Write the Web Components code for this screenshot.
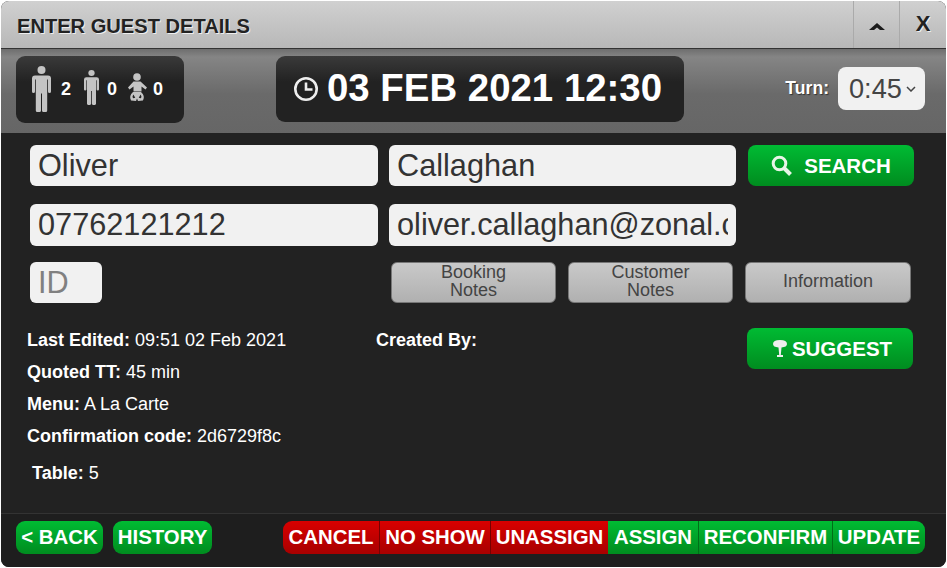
<!DOCTYPE html>
<html>
<head>
<meta charset="utf-8">
<title>Enter guest details</title>
<style>
  html, body { margin: 0; padding: 0; background: #fff; }
  body { font-family: "Liberation Sans", Arial, sans-serif; }
</style>
</head>
<body>
<guest-window>
  <window-title slot="title">ENTER GUEST DETAILS</window-title>
  <info-bar slot="info"></info-bar>
  <guest-form></guest-form>
  <guest-details></guest-details>
  <action-bar slot="footer"></action-bar>
</guest-window>

<script>
class GuestWindow extends HTMLElement {
  constructor () {
    super()
    this.attachShadow({ mode: 'open' }).innerHTML = /*html*/`
      <style>
        :host {
          display: flex;
          flex-direction: column;
          box-sizing: border-box;
          width: 945px;
          height: 566px;
          margin: 1px;
          background: #222;
          border-radius: 8px;
          overflow: hidden;
        }
        main { flex: 1; display: flex; flex-direction: column; }
      </style>
      <slot name="title"></slot>
      <slot name="info"></slot>
      <main><slot></slot></main>
      <slot name="footer"></slot>
    `
  }
}

class WindowTitle extends HTMLElement {
  constructor () {
    super()
    this.attachShadow({ mode: 'open' }).innerHTML = /*html*/`
      <style>
        :host {
          display: flex;
          align-items: stretch;
          height: 48px;
          box-sizing: border-box;
          background: linear-gradient(#d0d0d0, #b8b8b8);
          border-bottom: 1px solid #333;
          color: #222;
        }
        h1 {
          flex: 1;
          margin: 0;
          padding: 14px 0 0 16px;
          font: bold 20.1px "Liberation Sans", sans-serif;
          text-shadow: 1px 1px 0 #eee;
        }
        .btn {
          width: 46px;
          display: flex;
          align-items: center;
          justify-content: center;
          border-left: 1px solid #aaa;
          font: bold 22px "Liberation Sans", sans-serif;
          text-shadow: 1px 1px 0 #eee;
          padding-bottom: 2px;
          box-sizing: border-box;
        }
        .btn:last-child { width: 47px; }
        svg { margin-top: 5px; }
      </style>
      <h1><slot></slot></h1>
      <div class="btn"><svg width="18" height="10" viewBox="0 0 18 10"><path d="M1 9 L9 2 L17 9 L12 9 L9 6.5 L6 9 Z" fill="#1c1c1c"/></svg></div>
      <div class="btn">X</div>
    `
  }
}

class InfoBar extends HTMLElement {
  constructor () {
    super()
    const man = `<circle cx="9.5" cy="4" r="4"/><path d="M3 9.5h13q3 0 3 3v13q0 1.500-1.500 1.500t-1.500-1.500v-12h-.8v31q0 1.500-1.500 1.500h-2.200q-1.500 0-1.500-1.500v-17h-1v17q0 1.500-1.500 1.500h-2.200q-1.500 0-1.500-1.500v-31h-.8v12q0 1.500-1.500 1.500t-1.500-1.500v-13q0-3 3-3z"/>`
    this.attachShadow({ mode: 'open' }).innerHTML = /*html*/`
      <style>
        :host {
          display: flex;
          align-items: flex-start;
          height: 84px;
          box-sizing: border-box;
          padding: 7px 21px 0 15px;
          background: linear-gradient(#6e6e6e 0, #858585 8px, #6a6a6a 45px, #666 100%);
          font-family: "Liberation Sans", sans-serif;
          color: #fff;
        }
        .panel {
          height: 66px;
          box-sizing: border-box;
          background: linear-gradient(#3a3a3a, #222 26px);
          border-radius: 9px;
          display: flex;
          align-items: center;
        }
        .party { width: 168px; height: 67px; padding-left: 16px; font: bold 18px "Liberation Sans", sans-serif; }
        .party svg { display: block; fill: #c4c4c4; flex: none; }
        .date {
          width: 408px;
          margin-left: 92px;
          padding-left: 17px;
          font: bold 38.4px "Liberation Sans", sans-serif;
        }
        .date span { margin-bottom: 2px; }
        .date svg { margin-right: 8px; flex: none; }
        .turn {
          margin-left: auto;
          display: flex;
          align-items: center;
          gap: 9px;
          height: 43px;
          margin-top: 11px;
          font: bold 17.6px "Liberation Sans", sans-serif;
          text-shadow: 1px 1px 1px #333;
        }
        .select {
          width: 87px;
          height: 43px;
          box-sizing: border-box;
          padding-left: 11px;
          background: #f1f1f1;
          border-radius: 8px;
          color: #444;
          display: flex;
          align-items: center;
          font: 27.2px "Liberation Sans", sans-serif;
          text-shadow: none;
        }
        .select svg { margin-left: 4px; }
      </style>
      <div class="panel party">
        <svg width="19" height="46" viewBox="0 0 19 46" style="margin-bottom:2px">${man}</svg>
        <span style="margin:0 13px 0 10px">2</span>
        <svg width="15" height="35" viewBox="0 0 19 46" preserveAspectRatio="none" style="margin-bottom:5px">${man}</svg>
        <span style="margin:0 10px 0 8px">0</span>
        <svg width="20" height="29" viewBox="0 0 20 29" style="margin-bottom:4px">
          <circle cx="10" cy="4" r="3.800"/>
          <path d="M6.500 8.500h7l6.500 6-1.500 2-4-3v5h-8v-5l-4 3-1.500-2z"/>
          <path fill-rule="evenodd" d="M6 19q-4.500 4-2 8.500l5 .5 1-2.500 1 2.500 5-.5q2.500-4.500-2-8.500z M6.300 21.500q-1.300 2-.3 3.800l2.300-.6z M13.700 21.500q1.300 2 .3 3.800l-2.300-.6z"/>
        </svg>
        <span style="margin-left:6px">0</span>
      </div>
      <div class="panel date">
        <svg width="26" height="26" viewBox="0 0 26 26" fill="none" stroke="#eee" stroke-width="2.600"><circle cx="13" cy="13" r="10.700"/><path d="M13 6.500v7h6.500"/></svg>
        <span>03 FEB 2021 12:30</span>
      </div>
      <div class="turn">
        <span>Turn:</span>
        <div class="select">0:45<svg width="10" height="6" viewBox="0 0 10 6" fill="none" stroke="#444" stroke-width="1.500"><path d="M1 1l4 4 4-4"/></svg></div>
      </div>
    `
  }
}

class TextField extends HTMLElement {
  constructor () {
    super()
    this.attachShadow({ mode: 'open' }).innerHTML = /*html*/`
      <style>
        :host {
          display: block;
          height: 100%;
          box-sizing: border-box;
          padding: 0 8px;
          background: #f1f1f1;
          border-radius: 6px;
          color: #333;
          font: 30.7px/41px "Liberation Sans", sans-serif;
          white-space: nowrap;
        }
        :host([placeholder]) { color: #808080; }
        .clip { overflow: hidden; height: 100%; }
      </style>
      <div class="clip"><slot></slot></div>
    `
  }
}

class GreenButton extends HTMLElement {
  constructor () {
    super()
    this.attachShadow({ mode: 'open' }).innerHTML = /*html*/`
      <style>
        :host {
          display: flex;
          align-items: center;
          justify-content: center;
          gap: 4px;
          width: 166px;
          height: 41px;
          box-sizing: border-box;
          background: linear-gradient(#00bb33, #008c1f);
          border-radius: 8px;
          color: #fff;
          font: bold 20.5px "Liberation Sans", sans-serif;
        }
      </style>
      <slot name="icon"></slot>
      <slot></slot>
    `
  }
}

class GreyButton extends HTMLElement {
  constructor () {
    super()
    this.attachShadow({ mode: 'open' }).innerHTML = /*html*/`
      <style>
        :host {
          display: flex;
          align-items: center;
          justify-content: center;
          width: 165px;
          height: 41px;
          box-sizing: border-box;
          padding-bottom: 4px;
          background: linear-gradient(#c9c9c9, #b0b0b0);
          border: 1px solid #777;
          border-radius: 6px;
          color: #444;
          font: 18px/18px "Liberation Sans", sans-serif;
          text-align: center;
        }
      </style>
      <div><slot></slot></div>
    `
  }
}

class GuestForm extends HTMLElement {
  constructor () {
    super()
    this.attachShadow({ mode: 'open' }).innerHTML = /*html*/`
      <style>
        :host {
          display: grid;
          grid-template-columns: 348px 347px 166px;
          column-gap: 11px;
          grid-template-rows: 41px 42px 41px;
          row-gap: 18px;
          padding: 12px 0 0 29px;
        }
        .notes { display: flex; gap: 12px; grid-column: 2 / 4; padding-left: 2px; margin-right: -1px; margin-top: -2px; }
        .id { width: 72px; margin-top: -2px; }
        .search { margin-left: 1px; gap: 12px; }
        .search svg { display: block; }
        .last { width: 166px; }
      </style>
      <text-field>Oliver</text-field>
      <text-field>Callaghan</text-field>
      <green-button class="search">
        <svg slot="icon" width="21" height="21" viewBox="0 0 21 21" fill="none" stroke="#e8f5e8"><circle cx="8.500" cy="8.500" r="6.300" stroke-width="3"/><path d="M13 13L19.500 19.500" stroke-width="4"/></svg>
        SEARCH
      </green-button>
      <text-field>07762121212</text-field>
      <text-field>oliver.callaghan@zonal.co.uk</text-field>
      <div></div>
      <text-field class="id" placeholder>ID</text-field>
      <div class="notes">
        <grey-button>Booking<br>Notes</grey-button>
        <grey-button>Customer<br>Notes</grey-button>
        <grey-button class="last">Information</grey-button>
      </div>
    `
  }
}

class GuestDetails extends HTMLElement {
  constructor () {
    super()
    this.attachShadow({ mode: 'open' }).innerHTML = /*html*/`
      <style>
        :host {
          flex: 1;
          display: grid;
          grid-template-columns: 349px 371px 166px;
          padding: 19px 0 0 26px;
          color: #fff;
          font: 18px/32px "Liberation Sans", sans-serif;
        }
        b { font-weight: bold; }
        .table { margin: 5px 0 0 5px; }
        .suggest { margin-top: 4px; padding-left: 4px; font-size: 20.5px; }
        .suggest svg { display: block; }
      </style>
      <div>
        <div><b>Last Edited:</b> 09:51 02 Feb 2021</div>
        <div><b>Quoted TT:</b> 45 min</div>
        <div><b>Menu:</b> A La Carte</div>
        <div><b>Confirmation code:</b> 2d6729f8c</div>
        <div class="table"><b>Table:</b> 5</div>
      </div>
      <div><b>Created By:</b></div>
      <div>
        <green-button class="suggest">
          <svg slot="icon" width="16" height="20" viewBox="0 0 16 20" fill="#eee"><path d="M1 5q0-4 7-4t7 4q0 3-5.500 3.500l-.7 7.500h2.200v2h-6v-2h2.200l-.7-7.500q-5.500-.5-5.500-3.500z"/></svg>
          SUGGEST
        </green-button>
      </div>
    `
  }
}

class ActionBar extends HTMLElement {
  constructor () {
    super()
    this.attachShadow({ mode: 'open' }).innerHTML = /*html*/`
      <style>
        :host {
          display: flex;
          height: 54px;
          box-sizing: border-box;
          padding: 7px 21px 0 15px;
          border-top: 1px solid #333;
          background: #1e1e1e;
          font: bold 20.4px/32px "Liberation Sans", sans-serif;
          color: #fff;
        }
        div { height: 33px; box-sizing: border-box; text-align: center; white-space: nowrap; }
        .g { background: linear-gradient(#00bb33 0, #008c1f 100%); }
        .r { background: linear-gradient(#d80000 0, #a80000 100%); }
        .pill { border-radius: 9px; margin-right: 10px; }
        .group { display: flex; margin-left: auto; }
        .group div + div { border-left: 1px solid #700; }
        .group .g + .g { border-left: 1px solid #006f17; }
        .group .r + .g { border-left: 0; }
        .group div:first-child { border-radius: 9px 0 0 9px; }
        .group div:last-child { border-radius: 0 9px 9px 0; }
      </style>
      <div class="g pill" style="width:87px">&lt; BACK</div>
      <div class="g pill" style="width:99px;margin-right:0">HISTORY</div>
      <section class="group">
        <div class="r" style="width:96px">CANCEL</div>
        <div class="r" style="width:111px">NO SHOW</div>
        <div class="r" style="width:118px">UNASSIGN</div>
        <div class="g" style="width:90px">ASSIGN</div>
        <div class="g" style="width:134px">RECONFIRM</div>
        <div class="g" style="width:93px">UPDATE</div>
      </section>
    `
  }
}

customElements.define('guest-window', GuestWindow)
customElements.define('window-title', WindowTitle)
customElements.define('info-bar', InfoBar)
customElements.define('text-field', TextField)
customElements.define('green-button', GreenButton)
customElements.define('grey-button', GreyButton)
customElements.define('guest-form', GuestForm)
customElements.define('guest-details', GuestDetails)
customElements.define('action-bar', ActionBar)
</script>
</body>
</html>
